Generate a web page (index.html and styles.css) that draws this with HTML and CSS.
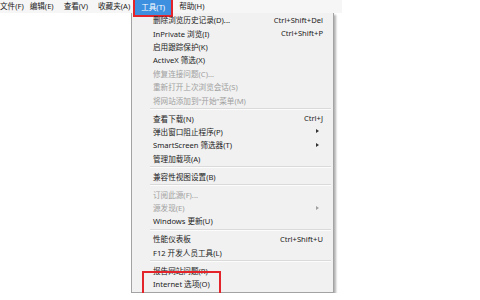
FILE: index.html
```html
<!DOCTYPE html>
<html lang="zh-CN">
<head>
    <meta charset="UTF-8">
    <title>工具菜单</title>
    <link rel="stylesheet" href="styles.css">
</head>
<body>
    <div class="menubar">
        <span class="menubar-item first">文件(F)</span>
        <span class="menubar-item">编辑(E)</span>
        <span class="menubar-item">查看(V)</span>
        <span class="menubar-item">收藏夹(A)</span>
        <span class="menubar-item active">工具(T)</span>
        <span class="menubar-item">帮助(H)</span>
    </div>

    <div class="dropdown">
        <div class="menu-row"><span class="label">删除浏览历史记录(D)...</span><span class="shortcut">Ctrl+Shift+Del</span></div>
        <div class="menu-row"><span class="label">InPrivate 浏览(I)</span><span class="shortcut">Ctrl+Shift+P</span></div>
        <div class="menu-row"><span class="label">启用跟踪保护(K)</span></div>
        <div class="menu-row"><span class="label">ActiveX 筛选(X)</span></div>
        <div class="menu-row disabled"><span class="label">修复连接问题(C)...</span></div>
        <div class="menu-row disabled"><span class="label">重新打开上次浏览会话(S)</span></div>
        <div class="menu-row disabled"><span class="label">将网站添加到“开始”菜单(M)</span></div>
        <div class="separator"></div>
        <div class="menu-row"><span class="label">查看下载(N)</span><span class="shortcut">Ctrl+J</span></div>
        <div class="menu-row"><span class="label">弹出窗口阻止程序(P)</span><span class="arrow"></span></div>
        <div class="menu-row"><span class="label">SmartScreen 筛选器(T)</span><span class="arrow"></span></div>
        <div class="menu-row"><span class="label">管理加载项(A)</span></div>
        <div class="separator"></div>
        <div class="menu-row"><span class="label">兼容性视图设置(B)</span></div>
        <div class="separator"></div>
        <div class="menu-row disabled"><span class="label">订阅此源(F)...</span></div>
        <div class="menu-row disabled"><span class="label">源发现(E)</span><span class="arrow"></span></div>
        <div class="menu-row"><span class="label">Windows 更新(U)</span></div>
        <div class="separator"></div>
        <div class="menu-row"><span class="label">性能仪表板</span><span class="shortcut">Ctrl+Shift+U</span></div>
        <div class="menu-row"><span class="label">F12 开发人员工具(L)</span></div>
        <div class="separator"></div>
        <div class="menu-row"><span class="label">报告网站问题(R)</span></div>
        <div class="menu-row"><span class="label marked">Internet 选项(O)</span></div>
    </div>
</body>
</html>
```

FILE: styles.css
```css
body {
    margin: 0;
    background: #fff;
    font-family: "Noto Sans", "Noto Sans CJK SC", sans-serif;
    font-size: 7.6px;
    color: #222;
}
.menubar {
    display: flex;
    width: 342px;
    height: 13px;
    background: #f6f6f6;
    gap: 10px;
}
.menubar-item {
    display: flex;
    align-items: center;
    line-height: 13px;
    white-space: nowrap;
}
.menubar-item.first {
    margin-right: -4px;
}
.menubar-item.active {
    background: #3d8fe0;
    color: #fff;
    height: 15px;
    padding: 0 6px;
    margin: 0 -2px 0 -5px;
    box-shadow: 0 0 0 2px #e3242b;
}
.dropdown {
    width: 201px;
    margin-left: 131px;
    background: #f1f1f1;
    border: 1px solid #a3a3a3;
    border-top: none;
    padding: 0 0 2px;
    box-shadow: 2px 2px 2px rgba(0, 0, 0, 0.3);
}
.menu-row {
    display: flex;
    align-items: center;
    height: 13.4px;
    padding-left: 21px;
    padding-right: 10px;
}
.menu-row .label {
    flex: 1;
    white-space: nowrap;
}
.menu-row.disabled {
    color: #a0a0a0;
}
.shortcut {
    white-space: nowrap;
}
.arrow {
    width: 0;
    height: 0;
    margin-right: 4px;
    border-left: 3px solid #333;
    border-top: 2.5px solid transparent;
    border-bottom: 2.5px solid transparent;
}
.menu-row.disabled .arrow {
    border-left-color: #a0a0a0;
}
.separator {
    height: 4.6px;
    display: flex;
    align-items: center;
    margin: 0 2px 0 18px;
}
.separator::before {
    content: "";
    flex: 1;
    border-top: 1px solid #dadada;
    border-bottom: 1px solid #fcfcfc;
}
.marked {
    flex: 0 0 auto !important;
    padding: 5px 9px 8px 9px;
    margin: -5px -9px -8px -9px;
    box-shadow: 0 0 0 2px #e3242b;
}
```
